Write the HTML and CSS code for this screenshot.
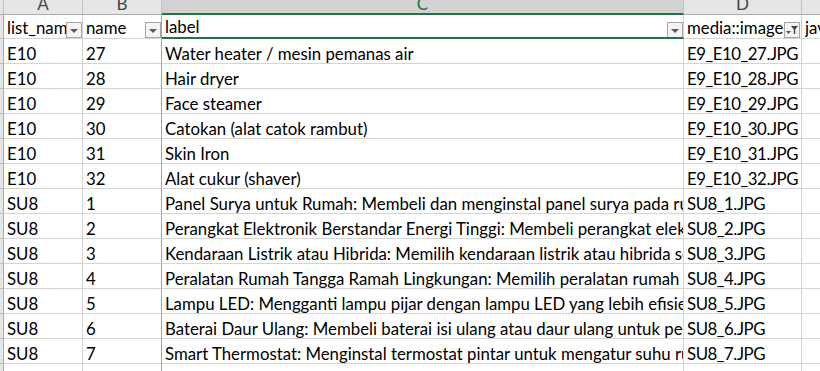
FILE: index.html
```html
<!DOCTYPE html>
<html lang="id">
<head>
    <meta charset="UTF-8">
    <title>Sheet1</title>
    <link rel="stylesheet" href="styles.css">
</head>
<body>
    <div class="sheet">
        <div class="row colhead">
            <div class="cell rh"></div>
            <div class="cell"><span>A</span></div>
            <div class="cell col-b"><span>B</span></div>
            <div class="cell sel"><span>C</span></div>
            <div class="cell"><span>D</span></div>
            <div class="cell"><span>E</span></div>
        </div>

        <div class="row fields">
            <div class="cell rh"></div>
            <div class="cell"><span class="txt">list_name</span><span class="drop"><i class="tri"></i></span></div>
            <div class="cell col-b"><span class="txt">name</span><span class="drop"><i class="tri"></i></span></div>
            <div class="cell active"><span class="txt">label</span><span class="drop"><i class="tri"></i></span></div>
            <div class="cell"><span class="txt">media::image</span><span class="drop filtered">
                <svg width="14" height="14" viewBox="0 0 14 14">
                    <path d="M1 8h5l-2.5 3z" fill="#555"/>
                    <path d="M6 3h7l-2.8 3.4v4.6h-1.4v-4.6z" fill="#444"/>
                </svg>
            </span></div>
            <div class="cell"><span class="txt">javarosa</span></div>
        </div>

        <div class="row"><div class="cell rh"></div><div class="cell">E10</div><div class="cell col-b">27</div><div class="cell">Water heater / mesin pemanas air</div><div class="cell file">E9_E10_27.JPG</div><div class="cell"></div></div>
        <div class="row"><div class="cell rh"></div><div class="cell">E10</div><div class="cell col-b">28</div><div class="cell">Hair dryer</div><div class="cell file">E9_E10_28.JPG</div><div class="cell"></div></div>
        <div class="row"><div class="cell rh"></div><div class="cell">E10</div><div class="cell col-b">29</div><div class="cell">Face steamer</div><div class="cell file">E9_E10_29.JPG</div><div class="cell"></div></div>
        <div class="row"><div class="cell rh"></div><div class="cell">E10</div><div class="cell col-b">30</div><div class="cell">Catokan (alat catok rambut)</div><div class="cell file">E9_E10_30.JPG</div><div class="cell"></div></div>
        <div class="row"><div class="cell rh"></div><div class="cell">E10</div><div class="cell col-b">31</div><div class="cell">Skin Iron</div><div class="cell file">E9_E10_31.JPG</div><div class="cell"></div></div>
        <div class="row"><div class="cell rh"></div><div class="cell">E10</div><div class="cell col-b">32</div><div class="cell">Alat cukur (shaver)</div><div class="cell file">E9_E10_32.JPG</div><div class="cell"></div></div>
        <div class="row"><div class="cell rh"></div><div class="cell">SU8</div><div class="cell col-b">1</div><div class="cell">Panel Surya untuk Rumah: Membeli dan menginstal panel surya pada rumah</div><div class="cell file">SU8_1.JPG</div><div class="cell"></div></div>
        <div class="row"><div class="cell rh"></div><div class="cell">SU8</div><div class="cell col-b">2</div><div class="cell">Perangkat Elektronik Berstandar Energi Tinggi: Membeli perangkat elektronik</div><div class="cell file">SU8_2.JPG</div><div class="cell"></div></div>
        <div class="row"><div class="cell rh"></div><div class="cell">SU8</div><div class="cell col-b">3</div><div class="cell">Kendaraan Listrik atau Hibrida: Memilih kendaraan listrik atau hibrida sebagai</div><div class="cell file">SU8_3.JPG</div><div class="cell"></div></div>
        <div class="row"><div class="cell rh"></div><div class="cell">SU8</div><div class="cell col-b">4</div><div class="cell">Peralatan Rumah Tangga Ramah Lingkungan: Memilih peralatan rumah</div><div class="cell file">SU8_4.JPG</div><div class="cell"></div></div>
        <div class="row"><div class="cell rh"></div><div class="cell">SU8</div><div class="cell col-b">5</div><div class="cell">Lampu LED: Mengganti lampu pijar dengan lampu LED yang lebih efisien</div><div class="cell file">SU8_5.JPG</div><div class="cell"></div></div>
        <div class="row"><div class="cell rh"></div><div class="cell">SU8</div><div class="cell col-b">6</div><div class="cell">Baterai Daur Ulang: Membeli baterai isi ulang atau daur ulang untuk perangkat</div><div class="cell file">SU8_6.JPG</div><div class="cell"></div></div>
        <div class="row"><div class="cell rh"></div><div class="cell">SU8</div><div class="cell col-b">7</div><div class="cell">Smart Thermostat: Menginstal termostat pintar untuk mengatur suhu ruangan</div><div class="cell file">SU8_7.JPG</div><div class="cell"></div></div>
        <div class="row"><div class="cell rh"></div><div class="cell"></div><div class="cell col-b"></div><div class="cell"></div><div class="cell"></div><div class="cell"></div></div>
    </div>
</body>
</html>
```

FILE: styles.css
```css
:root {
    --grid: #d4d4d4;
    --head-bg: #e6e6e6;
    --head-line: #c2c2c2;
    --sel-bg: #d2d2d2;
    --excel-green: #217346;
}

body {
    margin: 0;
    background: #fff;
    overflow: hidden;
    font-family: Lato, "Liberation Sans", sans-serif;
    font-size: 16.8px;
    color: #000;
}

.sheet {
    width: 902px;
}

.row {
    display: grid;
    grid-template-columns: 4px 79px 79px 522px 118px 100px;
    height: 25px;
}

.cell {
    box-sizing: border-box;
    border-right: 1px solid var(--grid);
    border-bottom: 1px solid var(--grid);
    padding: 0 0 0 3px;
    display: flex;
    align-items: flex-end;
    white-space: nowrap;
    overflow: hidden;
    line-height: 18px;
}

.cell.file {
    letter-spacing: -0.45px;
}

.cell.col-b {
    border-right-color: #a3a3a3;
}

.cell.rh {
    background: var(--head-bg);
    border-right-color: #ababab;
    border-bottom-color: var(--head-line);
    padding: 0;
}

/* column letters */
.colhead {
    height: 15px;
}

.colhead .cell {
    background: var(--head-bg);
    border-right-color: var(--head-line);
    border-bottom-color: #ababab;
    justify-content: center;
    align-items: flex-start;
    padding: 0;
    color: #444;
    font-size: 17px;
}

.colhead .cell span {
    line-height: 15px;
    margin-top: -4px;
}

.colhead .cell.sel {
    background: var(--sel-bg);
    color: var(--excel-green);
    border-bottom: 2px solid var(--excel-green);
}

/* field name row with filter buttons */
.fields {
    height: 24px;
}

.fields .cell {
    padding: 0 0 0 3px;
    align-items: flex-end;
}

.fields .cell .txt {
    flex: 1;
    min-width: 0;
    overflow: hidden;
    padding-bottom: 1px;
}

.fields .cell.active {
    border-bottom: 2px solid var(--excel-green);
}

.drop {
    flex: none;
    box-sizing: border-box;
    width: 16px;
    height: 16px;
    border: 1px solid #a6a6a6;
    background: #f4f4f4;
    display: flex;
    align-items: center;
    justify-content: center;
}

.active .drop {
    margin-bottom: -1px;
}

.tri {
    width: 0;
    height: 0;
    border-left: 4px solid transparent;
    border-right: 4px solid transparent;
    border-top: 4px solid #5a5a5a;
    margin-top: 2px;
}

.drop.filtered {
    margin-right: 1px;
}
```
